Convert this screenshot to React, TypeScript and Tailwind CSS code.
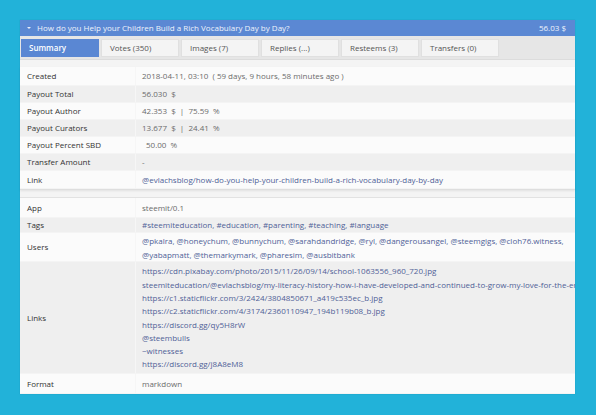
import React from "react";

const font = { fontFamily: '"Open Sans", "Liberation Sans", sans-serif' };

function Row({ label, children, alt, cls = "h-[17px] items-center" }: { label: string; children: React.ReactNode; alt?: boolean; cls?: string }) {
  return (
    <div className={`flex ${cls} ${alt ? "bg-[#efefef]" : "bg-[#fbfbfb]"} border-b border-[#f4f4f4]`}>
      <div className="w-[116px] shrink-0 pl-[7px] text-[#333] self-stretch flex items-center border-r border-[#f6f6f6]">{label}</div>
      <div className="pl-[6px] text-[#6b6b6b] whitespace-nowrap overflow-hidden flex-1 min-w-0">{children}</div>
    </div>
  );
}

const L = ({ children }: { children: React.ReactNode }) => <span className="text-[#4f5f97]">{children}</span>;

export default function App() {
  const tabs = ["Summary", "Votes (350)", "Images (7)", "Replies (...)", "Resteems (3)", "Transfers (0)"];
  return (
    <div className="w-[596px] h-[415px] bg-[#22b2d9] pt-[20px] pl-[20px] overflow-hidden text-[8px] leading-[12px]" style={font}>
      <div className="w-[555px] bg-[#f6f6f6] shadow-[0_0_1px_rgba(0,0,0,0.2)]">
        <div className="h-[16px] bg-[#5b88d3] flex items-center text-[#eef3fb] pl-[6px] pr-[9px]">
          <svg width="6" height="6" viewBox="0 0 6 6" className="mr-[5px]"><path d="M1 2 L5 2 L3 4 Z" fill="#e8eefa" /></svg>
          <span>How do you Help your Children Build a Rich Vocabulary Day by Day?</span>
          <span className="ml-auto">56.03 $</span>
        </div>
        <div className="h-[24px] bg-[#e6e6e6] flex items-center gap-[2px] pl-[1px] border-b border-[#dcdcdc]">
          {tabs.map((t, i) => (
            <div
              key={t}
              className={`w-[78px] h-[18px] flex items-center pl-[8px] ${i === 0 ? "bg-[#5a87d3] text-white font-semibold" : "bg-[#f4f4f4] text-[#555] border border-[#e0e0e0]"}`}
            >
              {t}
            </div>
          ))}
        </div>
        <div className="pt-[7px] bg-[#f4f4f4]">
          <div className="bg-[#fbfbfb] border-b border-[#dedede] shadow-[0_1px_2px_rgba(0,0,0,0.08)]">
            <Row label="Created" cls="h-[19px] items-center">2018-04-11, 03:10 &nbsp;( 59 days, 9 hours, 58 minutes ago )</Row>
            <Row label="Payout Total" alt>56.030 &nbsp;$</Row>
            <Row label="Payout Author">42.353 &nbsp;$ &nbsp;| &nbsp;75.59 &nbsp;%</Row>
            <Row label="Payout Curators" alt>13.677 &nbsp;$ &nbsp;| &nbsp;24.41 &nbsp;%</Row>
            <Row label="Payout Percent SBD"><span className="pl-[4px]">50.00 &nbsp;%</span></Row>
            <Row label="Transfer Amount" alt>-</Row>
            <Row label="Link" cls="h-[18px] items-center"><L>@evlachsblog/how-do-you-help-your-children-build-a-rich-vocabulary-day-by-day</L></Row>
          </div>
          <div className="h-[7px]" />
          <div className="bg-[#fbfbfb] border-t border-[#e2e2e2]">
            <Row label="App" cls="h-[20px] items-center">steemit/0.1</Row>
            <Row label="Tags" alt cls="h-[15px] items-center"><L>#steemiteducation, #education, #parenting, #teaching, #language</L></Row>
            <Row label="Users" cls="h-[29px] items-center">
              <div className="leading-[14px] text-[#4f5f97] pt-[1px]">
                <div>@pkalra, @honeychum, @bunnychum, @sarahdandridge, @ryl, @dangerousangel, @steemgigs, @cloh76.witness,</div>
                <div>@yabapmatt, @themarkymark, @pharesim, @ausbitbank</div>
              </div>
            </Row>
            <Row label="Links" alt cls="h-[112px] items-center">
              <div className="leading-[13.3px] text-[#4f5f97]">
                <div>https://cdn.pixabay.com/photo/2015/11/26/09/14/school-1063556_960_720.jpg</div>
                <div>steemiteducation/@evlachsblog/my-literacy-history-how-i-have-developed-and-continued-to-grow-my-love-for-the-english-language</div>
                <div>https://c1.staticflickr.com/3/2424/3804850671_a419c535ec_b.jpg</div>
                <div>https://c2.staticflickr.com/4/3174/2360110947_194b119b08_b.jpg</div>
                <div>https://discord.gg/qy5H8rW</div>
                <div>@steembulls</div>
                <div>~witnesses</div>
                <div>https://discord.gg/j8A8eM8</div>
              </div>
            </Row>
            <Row label="Format" cls="h-[20px] items-center">markdown</Row>
          </div>
        </div>
      </div>
    </div>
  );
}
